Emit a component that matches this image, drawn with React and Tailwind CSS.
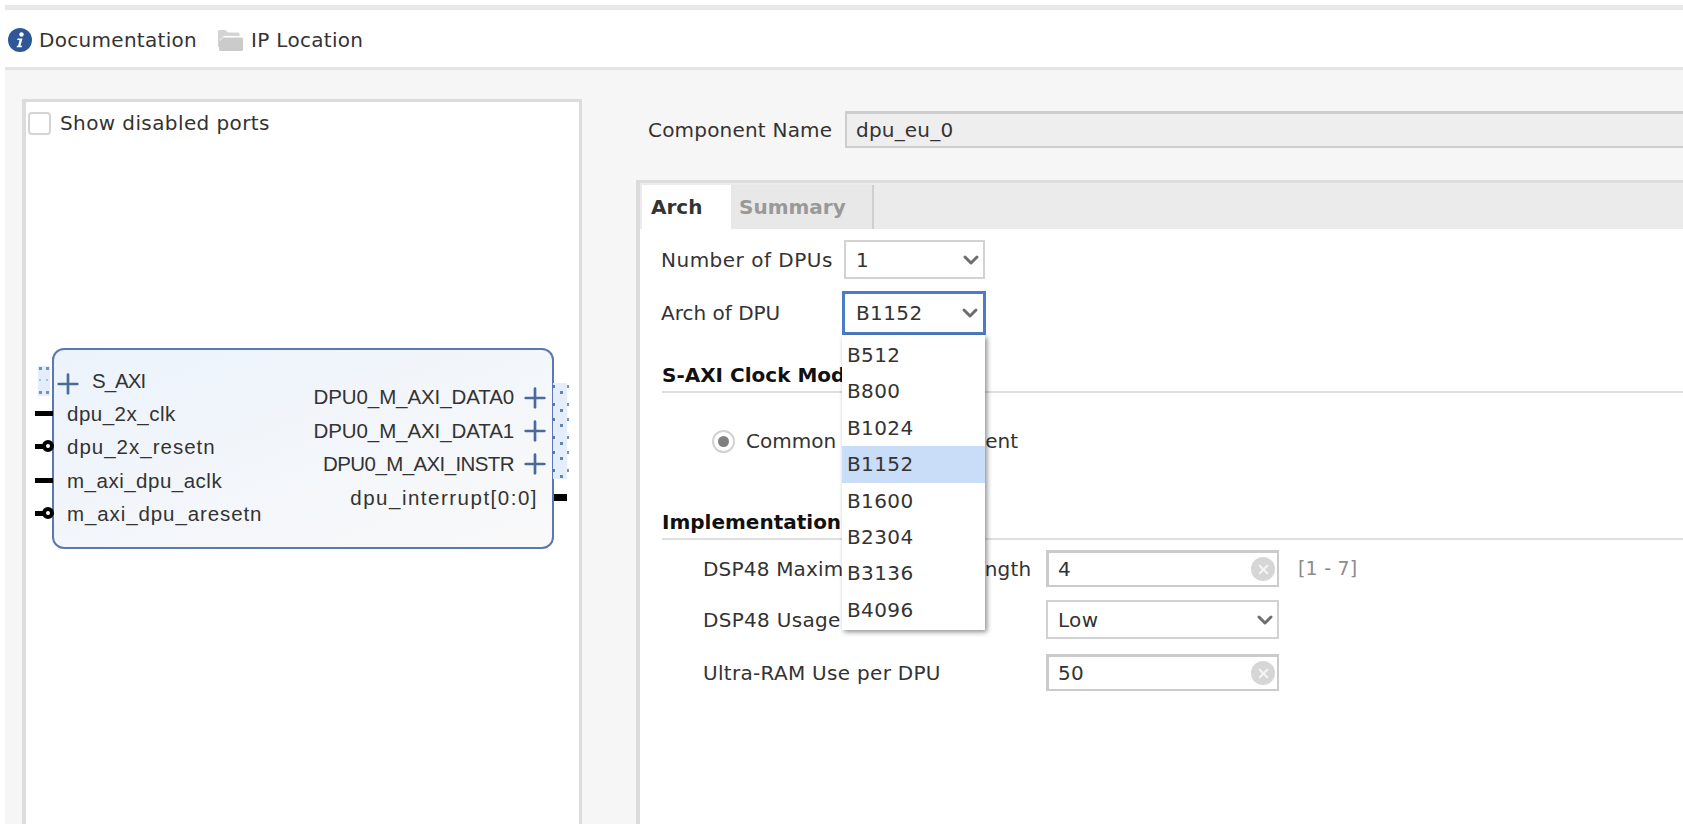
import { ChevronDown, Plus, X } from "lucide-react";

const LEFT_PORTS = [
  { label: "dpu_2x_clk", invert: false, spacing: "tracking-[0.5px]" },
  { label: "dpu_2x_resetn", invert: true, spacing: "tracking-[1px]" },
  { label: "m_axi_dpu_aclk", invert: false, spacing: "tracking-[0.5px]" },
  { label: "m_axi_dpu_aresetn", invert: true, spacing: "tracking-[0.9px]" },
];

const RIGHT_PORTS = [
  { label: "DPU0_M_AXI_DATA0", spacing: "tracking-[-0.1px]" },
  { label: "DPU0_M_AXI_DATA1", spacing: "tracking-[-0.1px]" },
  { label: "DPU0_M_AXI_INSTR", spacing: "tracking-[-0.6px]" },
];

const ARCH_OPTIONS = ["B512", "B800", "B1024", "B1152", "B1600", "B2304", "B3136", "B4096"];

function InfoIcon() {
  return (
    <svg width="24" height="24" viewBox="0 0 24 24" className="shrink-0">
      <circle cx="12" cy="12" r="12" fill="#2f5797" />
      <circle cx="13.5" cy="6.5" r="2.2" fill="#fff" />
      <path d="M9.5 10.5h5l-2 7.2h1.6l-.4 1.6H8.6l.4-1.6h1.1l1.4-5.6H9.2z" fill="#fff" />
    </svg>
  );
}

function FolderIcon() {
  return (
    <svg width="26" height="24" viewBox="0 0 26 24" className="shrink-0">
      <path d="M1 3.5A1.5 1.5 0 0 1 2.5 2h6L11 4.5h10A1.5 1.5 0 0 1 22.500 6v2H7L3 12v7H1z" fill="#d4d4d4" />
      <path d="M3.500 23A1.500 1.500 0 0 1 2 21.500V14l4-4.500h18.500A1.500 1.500 0 0 1 26 11v10.500a1.500 1.500 0 0 1-1.500 1.500z" fill="#cbcbcb" />
    </svg>
  );
}

function PortDots({ className }) {
  return (
    <svg className={`absolute ${className}`} width="16" height="30" viewBox="0 0 16 30">
      <rect width="12" height="30" fill="#e4eefa" />
      <rect x="1" y="1" width="3" height="3" fill="#6f93bd" />
      <rect x="8" y="1" width="3" height="3" fill="#6f93bd" />
      <rect x="1" y="13" width="2" height="2" fill="#a9c0da" />
      <rect x="8" y="13" width="2" height="2" fill="#a9c0da" />
      <rect x="1" y="25" width="3" height="3" fill="#6f93bd" />
      <rect x="8" y="25" width="3" height="3" fill="#6f93bd" />
    </svg>
  );
}

function RightDots() {
  return (
    <svg className="absolute left-[calc(100%+1px)] top-[33px]" width="18" height="96" viewBox="0 0 18 96">
      <rect width="14" height="96" fill="#e4eefa" />
      {[8, 26, 41, 59, 74, 92].map((y) => (
        <g key={y}>
          <rect x="0" y={y - 6} width="2" height="3" fill="#5c78b0" />
          <rect x="7" y={y} width="3" height="3" fill="#5f86b3" />
          <rect x="14" y={y - 6} width="2" height="3" fill="#7a93b4" />
        </g>
      ))}
    </svg>
  );
}

function SelectBox({ value, focused, className = "" }) {
  return (
    <div
      className={`flex items-center justify-between bg-white ${
        focused ? "border-[3px] border-[#4d7cc7] pl-[11px] pr-px" : "border-2 border-[#d2d2d2] pl-[10px]"
      } ${className}`}
    >
      <span>{value}</span>
      <ChevronDown size={24} strokeWidth={3} className="text-[#6e6e6e]" />
    </div>
  );
}

function ClearInput({ value }) {
  return (
    <div className="flex items-center justify-between w-[233px] h-[37px] bg-white border-2 border-t-[3px] border-l-[3px] border-[#cbcbcb] pl-[9px] pr-[2px]">
      <span>{value}</span>
      <span className="flex items-center justify-center w-6 h-6 rounded-full bg-[#d6d6d6]">
        <X size={15} strokeWidth={3.5} className="text-[#f4f4f4]" />
      </span>
    </div>
  );
}

function SectionTitle({ children, className = "" }) {
  return (
    <div className={`ml-[22px] h-8 border-b-2 border-[#dfdfdf] font-bold text-[#111] leading-[28px] ${className}`}>
      {children}
    </div>
  );
}

function IpBlock() {
  return (
    <div className="relative ml-[26px] mt-[210px] w-[502px] h-[201px] rounded-[12px] border-2 border-[#5c78b0] bg-gradient-to-br from-[#ecf3fc] to-[#f9f9f9] font-['Liberation_Sans',sans-serif] text-[20.500px] text-[#333]">
      <PortDots className="left-[-16px] top-[16px]" />
      <RightDots />

      <div className="absolute left-[-2px] top-[15px] flex items-center h-[33px]">
        <Plus size={32} strokeWidth={2} className="text-[#4a6a9a] translate-y-[2px]" />
        <span className="ml-[8px] tracking-[-1px]">S_AXI</span>
      </div>

      {/* Left ports */}
      <div className="flex flex-col pt-[47px] pl-[13px]">
        {LEFT_PORTS.map((port) => (
          <div key={port.label} className={`relative h-[33.300px] leading-[33px] ${port.spacing}`}>
            <span className="absolute left-[-32px] top-[14px] h-[5px] w-[18px] bg-black" />
            {port.invert && (
              <span className="absolute left-[-25px] top-[10px] w-[12px] h-[12px] rounded-full border-4 border-black bg-white" />
            )}
            {port.label}
          </div>
        ))}
      </div>

      {/* Right ports */}
      <div className="absolute right-px top-[31px] flex flex-col items-end">
        {RIGHT_PORTS.map((port) => (
          <div key={port.label} className="flex items-center h-[33.300px]">
            <span className={port.spacing}>{port.label}</span>
            <Plus size={32} strokeWidth={2} className="ml-[5px] text-[#4a6a9a]" />
          </div>
        ))}
        <div className="h-[33.300px] leading-[33px] pr-[13px] tracking-[1.5px]">dpu_interrupt[0:0]</div>
      </div>
      <span className="absolute left-[calc(100%+2px)] top-[144px] h-[7px] w-[13px] bg-black" />
    </div>
  );
}

export default function App() {
  return (
    <div className="flex flex-col w-[1683px] h-[824px] overflow-hidden bg-white font-['DejaVu_Sans',sans-serif] text-[20px] text-[#333]">
      <div className="mt-[5px] ml-[5px] h-[5px] bg-[#e8e8e8]" />

      {/* Toolbar */}
      <div className="flex items-center h-[57px] pl-2 pt-[2px] tracking-[0.3px]">
        <InfoIcon />
        <span className="ml-[7px]">Documentation</span>
        <span className="ml-[20px]"><FolderIcon /></span>
        <span className="ml-2">IP Location</span>
      </div>

      <div className="flex flex-1 min-h-0 ml-[5px] pl-[17px] pt-[29px] bg-[#f6f6f6] border-t-[3px] border-[#e4e4e4]">
        {/* Block diagram */}
        <div className="w-[560px] shrink-0 bg-white border-[3px] border-b-0 border-l-4 border-[#dcdcdc]">
          <div className="flex items-center mt-[6px] ml-[2px]">
            <span className="w-[23px] h-[23px] rounded-[4px] border-2 border-[#d4d4d4] bg-white" />
            <span className="ml-[9px] tracking-[0.4px]">Show disabled ports</span>
          </div>
          <IpBlock />
        </div>

        {/* Settings */}
        <div className="flex flex-col flex-1 min-w-0 ml-[54px] pt-3">
          <div className="flex items-center h-[37px] pl-3 tracking-[0.2px]">
            <span className="w-[197px] shrink-0">Component Name</span>
            <div className="flex-1 h-full flex items-center pl-[9px] bg-[#eeeeee] border-2 border-r-0 border-t-[3px] border-[#cdcdcd]">
              dpu_eu_0
            </div>
          </div>

          <div className="flex flex-col flex-1 mt-[32px] bg-white border-t-[3px] border-l-4 border-[#dcdcdc]">
            <div className="flex h-[46px] bg-[#ebebeb] font-bold">
              <div className="flex items-center w-[89px] ml-[2px] pl-[9px] mt-[2px] bg-white text-[#333]">Arch</div>
              <div className="flex items-center w-[143px] pl-2 mt-[2px] bg-[#e8e8e8] border-r-2 border-[#cfcfcf] text-[#999]">Summary</div>
            </div>

            <div className="flex items-center pl-[21px] mt-[11px]">
              <span className="w-[183px] shrink-0 tracking-[0.5px]">Number of DPUs</span>
              <SelectBox value="1" className="w-[141px] h-[39px]" />
            </div>

            <div className="flex items-center pl-[21px] mt-3">
              <span className="w-[181px] shrink-0">Arch of DPU</span>
              <div className="relative">
                <SelectBox value="B1152" focused className="w-[144px] h-[44px] tracking-[0.4px]" />
                <div className="absolute z-10 top-full left-0 w-[143px] py-[2px] bg-white shadow-[2px_2px_5px_rgba(0,0,0,0.45)] tracking-[0.4px]">
                  {ARCH_OPTIONS.map((option) => (
                    <div
                      key={option}
                      className={`h-[36.400px] leading-[36px] pl-[5px] ${option === "B1152" ? "bg-[#c9dcf8]" : ""}`}
                    >
                      {option}
                    </div>
                  ))}
                </div>
              </div>
            </div>

            <SectionTitle className="mt-[26px]">S-AXI Clock Mode</SectionTitle>

            <div className="flex items-center ml-[72px] mt-[33px] h-[30px]">
              <span className="flex items-center justify-center w-[23px] h-[23px] rounded-full border-2 border-[#d2d2d2] bg-white">
                <span className="w-[11px] h-[11px] rounded-full bg-[#808080]" />
              </span>
              <span className="ml-[11px] whitespace-pre">Common with Independent</span>
            </div>

            <SectionTitle className="mt-[52px]">Implementation</SectionTitle>

            <div className="flex items-center pl-[63px] mt-[10px] tracking-[0.2px]">
              <span className="w-[343px] shrink-0">DSP48 Maximal Cascade Length</span>
              <ClearInput value="4" />
              <span className="ml-[19px] text-[#8c8c8c] text-[19px]">[1 - 7]</span>
            </div>
            <div className="flex items-center pl-[63px] mt-[13px] tracking-[0.3px]">
              <span className="w-[343px] shrink-0">DSP48 Usage</span>
              <SelectBox value="Low" className="w-[233px] h-[39px]" />
            </div>
            <div className="flex items-center pl-[63px] mt-[15px] tracking-[0.3px]">
              <span className="w-[343px] shrink-0">Ultra-RAM Use per DPU</span>
              <ClearInput value="50" />
            </div>
          </div>
        </div>
      </div>
    </div>
  );
}
